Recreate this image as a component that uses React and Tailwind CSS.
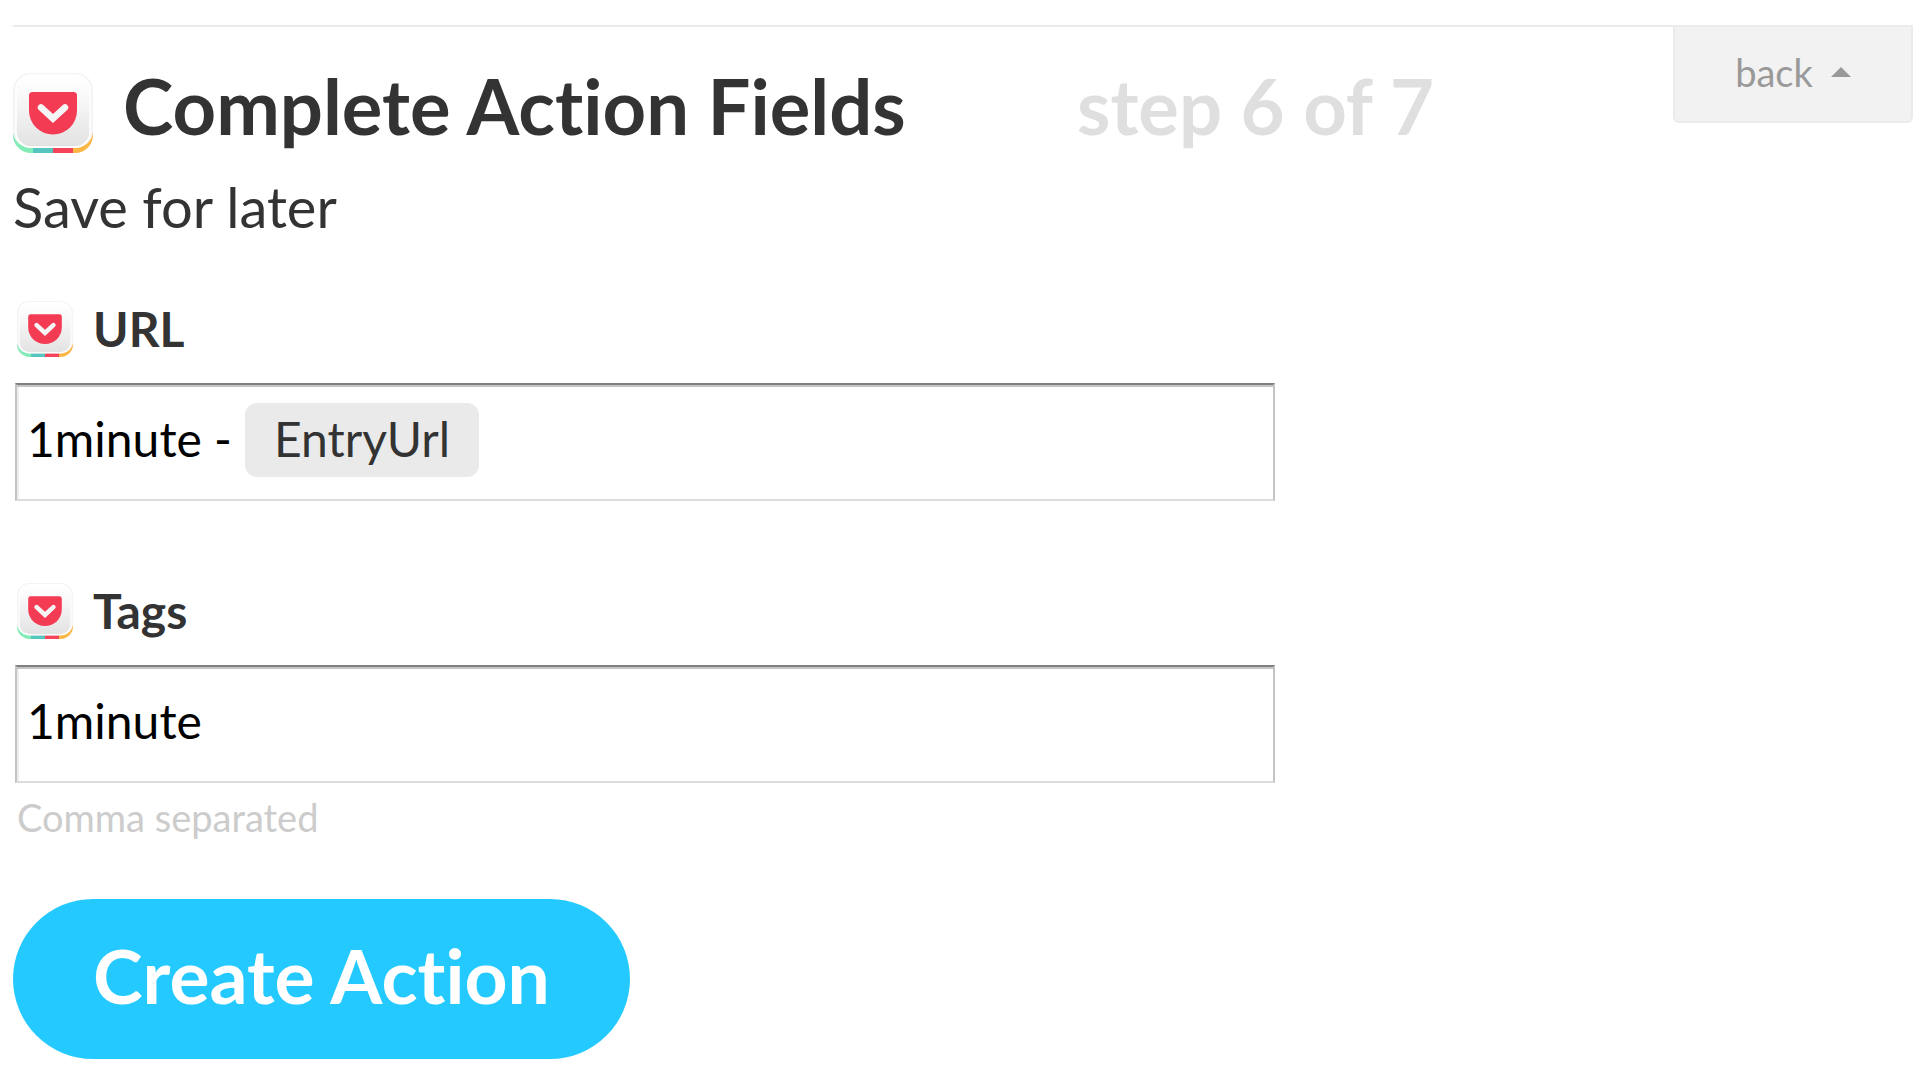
import React from "react";

function PocketIcon({ className }) {
  const id = React.useId();
  return (
    <svg viewBox="0 0 80 80" className={className} aria-hidden="true">
      <defs>
        <linearGradient id={id} x1="0" y1="0" x2="0" y2="1">
          <stop offset="0" stopColor="#ffffff" />
          <stop offset="0.25" stopColor="#fafafa" />
          <stop offset="1" stopColor="#e2e2e2" />
        </linearGradient>
        <clipPath id={id + "c"}>
          <rect width="80" height="80" rx="18" />
        </clipPath>
      </defs>
      <g clipPath={`url(#${id}c)`}>
        <rect width="80" height="80" fill="#f3f3f3" />
        <rect y="60" width="20" height="20" fill="#83edb8" />
        <rect x="20" y="60" width="20" height="20" fill="#56c5c0" />
        <rect x="40" y="60" width="20" height="20" fill="#f6435c" />
        <rect x="60" y="60" width="20" height="20" fill="#fcb643" />
      </g>
      <path d="M0 18A18 18 0 0 1 18 0H62A18 18 0 0 1 80 18V58A18 17 0 0 1 62 75H18A18 17 0 0 1 0 58Z" fill="#f4f4f4" />
      <rect x="3" y="2" width="74" height="72" rx="15" fill={`url(#${id})`} stroke="#ffffff" strokeWidth="1.5" />
      <path d="M19.500 19H60.500Q64 19 64 22.500V37.500A24 24 0 0 1 16 37.500V22.500Q16 19 19.500 19Z" fill="#f43b54" />
      <path d="M28 34.500L40 45.500L52 34.500" fill="none" stroke="#f5f5f5" strokeWidth="6.500" strokeLinecap="round" strokeLinejoin="miter" />
    </svg>
  );
}

const fieldBox =
  "h-[118px] w-full border-2 border-t-[#808080] border-r-[#c4c4c4] border-b-[#dcdcdc] border-l-[#c4c4c4] bg-white text-[48px] text-black shadow-[inset_0_2px_0_#c4c4c4,inset_2px_0_0_#ededed]";

function FieldLabel({ htmlFor, children }) {
  return (
    <label htmlFor={htmlFor} className="flex h-[60px] items-center gap-5 pl-[2px] text-[48px] leading-[60px] font-bold">
      <PocketIcon className="size-14 shrink-0" />
      {children}
    </label>
  );
}

export default function App() {
  return (
    <div className="bg-white pt-[25px] pr-[17px] pb-3 pl-[13px] font-['Lato',sans-serif] text-[#333333] [font-variant-ligatures:no-common-ligatures]">
      <main className="border-t-2 border-[#ebebeb]">
        <header className="flex items-start justify-between">
          <div className="flex items-start pt-[38px]">
            <PocketIcon className="mt-2 mr-[30px] size-20 shrink-0" />
            <h1 className="w-[954px] text-[76px] leading-[82px] font-bold whitespace-nowrap">Complete Action Fields</h1>
            <p className="text-[76px] leading-[82px] font-bold whitespace-nowrap text-[#dfdfdf]">step 6 of 7</p>
          </div>
          <button type="button" className="flex h-24 w-60 items-center justify-center gap-[18px] rounded-b-md border-2 border-t-0 border-[#ebebeb] bg-[#f2f2f2] pb-1 text-[38px] text-[#999999]">
            back
            <svg viewBox="0 0 20 10" className="h-[10px] w-5" aria-hidden="true">
              <path d="M0 10L10 0L20 10Z" fill="currentColor" />
            </svg>
          </button>
        </header>
        <h2 className="mt-4 text-[56px] leading-[76px]">Save for later</h2>

        <form className="pl-[2px]" onSubmit={(e) => e.preventDefault()}>
          <section className="mt-[54px] w-[1260px] max-w-full">
            <FieldLabel htmlFor="url">URL</FieldLabel>
            <div className={`${fieldBox} mt-6 flex items-start pt-[18px] pl-[10px]`}>
              <input id="url" defaultValue="1minute -" className="h-[74px] w-[218px] bg-transparent pb-1 outline-none" />
              <button type="button" className="h-[74px] rounded-xl bg-[#eaeaea] px-[29px] pb-1 text-[#333333]">EntryUrl</button>
            </div>
          </section>
          <section className="mt-20 w-[1260px] max-w-full">
            <FieldLabel htmlFor="tags">Tags</FieldLabel>
            <input id="tags" defaultValue="1minute" aria-describedby="tags-hint" className={`${fieldBox} mt-6 block px-[10px] pb-2 outline-none`} />
            <p id="tags-hint" className="mt-3 pl-[2px] text-[38px] leading-[44px] text-[#cccccc]">Comma separated</p>
          </section>
          <button type="submit" className="mt-[60px] -ml-[2px] h-40 rounded-full bg-[#24caff] px-20 pb-2 text-[75px] font-bold text-white">Create Action</button>
        </form>
      </main>
    </div>
  );
}
